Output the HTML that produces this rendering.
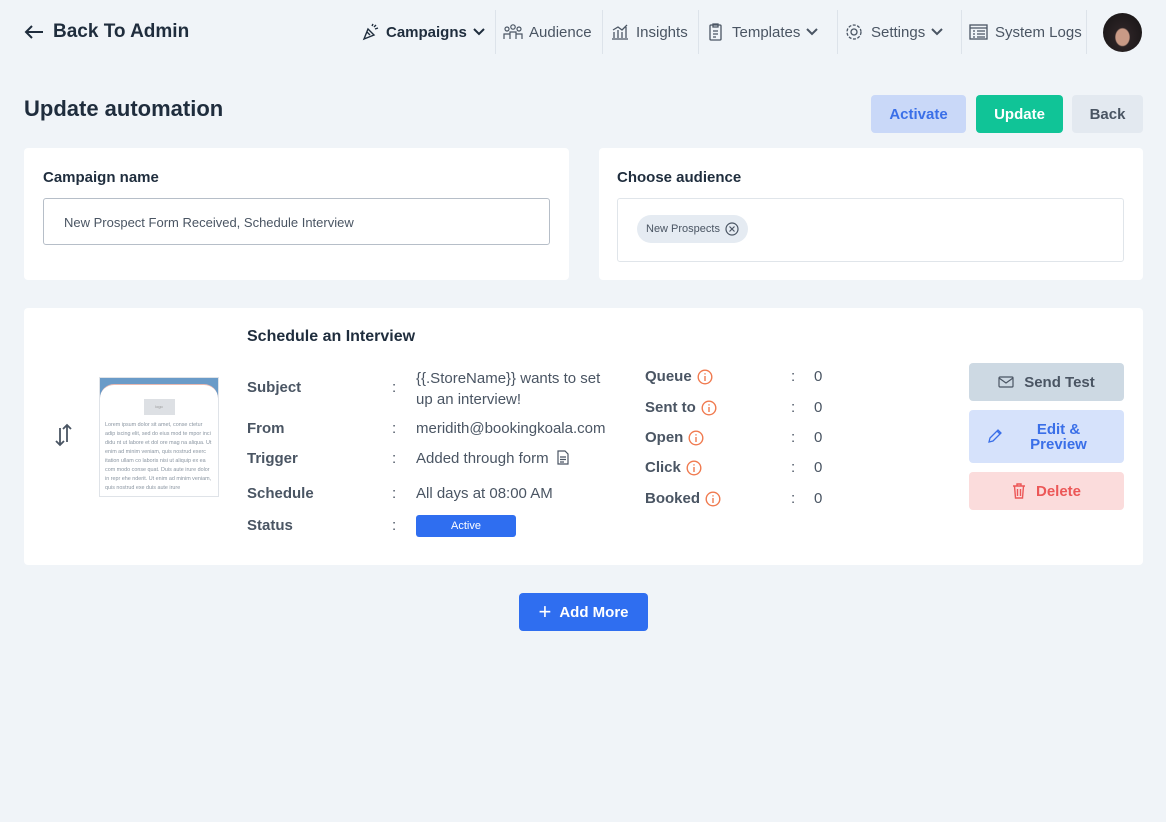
<!DOCTYPE html>
<html><head><meta charset="utf-8"><style>
*{box-sizing:border-box;margin:0;padding:0}
body{width:1166px;height:822px;background:#f0f4f8;font-family:"Liberation Sans",sans-serif;color:#1f2d3d;position:relative;overflow:hidden}
.a{position:absolute}
.nav{font-size:15px;color:#4a5563;display:flex;align-items:center;gap:6px;top:22px;height:20px}
.sep{position:absolute;top:10px;width:1px;height:44px;background:#dde3ea}
.card{position:absolute;background:#fff;border-radius:4px}
.lbl{font-size:15px;color:#3d4a57;font-weight:bold}
.btn{position:absolute;border-radius:4px;display:flex;align-items:center;justify-content:center;font-size:15px;font-weight:bold}
.row{position:absolute;font-size:15px;color:#4a5563;line-height:18px}
.k{font-weight:bold;color:#4a5563;display:flex;align-items:center}
.info{margin-left:5px;display:block}
</style></head><body>
<div class="a" style="left:24px;top:21px;font-size:19px;font-weight:bold;color:#1f2d3d;display:flex;align-items:center"><svg width="20" height="14" viewBox="0 0 20 14" fill="none" stroke="#1f2d3d" stroke-width="2" style="margin-right:9px"><path d="M19 7H2M8 1L2 7l6 6"/></svg>Back To Admin</div>

<div class="a nav" style="left:360px;color:#1f2d3d;font-weight:bold"><svg width="20" height="18" viewBox="0 0 20 18" fill="none" stroke="#1f2d3d" stroke-width="1.4"><path d="M4 16l4-10 6 6-10 4zM7 9l3 3M12 3l1-2M15 6l3-1M14 4l2-2"/></svg>Campaigns <svg width="12" height="8" viewBox="0 0 12 8" fill="none" stroke="#1f2d3d" stroke-width="2"><path d="M1 1l5 5 5-5"/></svg></div>
<div class="sep" style="left:495px"></div>
<div class="a nav" style="left:503px"><svg width="20" height="18" viewBox="0 0 20 18" fill="none" stroke="#4a5563" stroke-width="1.2"><circle cx="4" cy="6" r="2"/><circle cx="10" cy="4" r="2.2"/><circle cx="16" cy="6" r="2"/><path d="M1 16v-5h6v5M7 16v-7h6v7M13 16v-5h6v5"/></svg>Audience</div>
<div class="sep" style="left:602px"></div>
<div class="a nav" style="left:610px"><svg width="20" height="18" viewBox="0 0 20 18" fill="none" stroke="#4a5563" stroke-width="1.3"><path d="M2 16h16M4 15V9M8 15V7M12 15V9M16 15V4M3 7l5-3 4 3 5-5"/></svg>Insights</div>
<div class="sep" style="left:698px"></div>
<div class="a nav" style="left:706px"><svg width="20" height="18" viewBox="0 0 20 18" fill="none" stroke="#4a5563" stroke-width="1.3"><rect x="4" y="2" width="11" height="15" rx="1"/><path d="M7 1h5v3H7zM7 8h5M7 11h5M7 14h3"/></svg> Templates <svg width="12" height="8" viewBox="0 0 12 8" fill="none" stroke="#4a5563" stroke-width="2"><path d="M1 1l5 5 5-5"/></svg></div>
<div class="sep" style="left:837px"></div>
<div class="a nav" style="left:845px"><svg width="20" height="18" viewBox="0 0 20 18" fill="none" stroke="#4a5563" stroke-width="1.3"><circle cx="9" cy="9" r="3"/><circle cx="9" cy="9" r="7" stroke-dasharray="3 1.5"/></svg>Settings <svg width="12" height="8" viewBox="0 0 12 8" fill="none" stroke="#4a5563" stroke-width="2"><path d="M1 1l5 5 5-5"/></svg></div>
<div class="sep" style="left:961px"></div>
<div class="a nav" style="left:969px"><svg width="20" height="18" viewBox="0 0 20 18" fill="none" stroke="#4a5563" stroke-width="1.3"><rect x="1" y="2" width="17" height="14"/><path d="M1 5h17M4 8h2M8 8h8M4 11h2M8 11h8M4 14h2M8 14h8"/></svg>System Logs</div>
<div class="sep" style="left:1086px"></div>
<div class="a" style="left:1103px;top:13px;width:39px;height:39px;border-radius:50%;background:radial-gradient(ellipse at 50% 62%,#c99a86 0 24%,#2a2224 28%,#151314 100%)"></div>

<div class="a" style="left:24px;top:96px;font-size:22px;font-weight:bold;color:#1f2d3d">Update automation</div>
<div class="btn" style="left:871px;top:95px;width:95px;height:38px;background:#c9d8f8;color:#3a6fe8">Activate</div>
<div class="btn" style="left:976px;top:95px;width:87px;height:38px;background:#10c497;color:#fff">Update</div>
<div class="btn" style="left:1072px;top:95px;width:71px;height:38px;background:#e3e9f0;color:#4a5563">Back</div>

<div class="card" style="left:24px;top:148px;width:545px;height:132px">
<div class="lbl a" style="left:19px;top:21px;color:#1f2d3d">Campaign name</div>
<div class="a" style="left:19px;top:50px;width:507px;height:47px;border:1px solid #b6bec8;border-radius:3px;font-size:13px;color:#4a5563;padding:16px 20px">New Prospect Form Received, Schedule Interview</div>
</div>
<div class="card" style="left:599px;top:148px;width:544px;height:132px">
<div class="lbl a" style="left:18px;top:21px;color:#1f2d3d">Choose audience</div>
<div class="a" style="left:18px;top:50px;width:507px;height:64px;border:1px solid #e0e5ea;border-radius:3px"></div>
<div class="a" style="left:38px;top:67px;height:28px;border-radius:14px;background:#e5ebf2;font-size:11px;color:#4a5563;padding:0 9px;display:flex;align-items:center">New Prospects <svg width="14" height="14" viewBox="0 0 14 14" fill="none" stroke="#4a5563" stroke-width="1.2" style="margin-left:5px"><circle cx="7" cy="7" r="6"/><path d="M4.5 4.5l5 5M9.5 4.5l-5 5"/></svg></div>
</div>

<div class="card" style="left:24px;top:308px;width:1119px;height:257px">
<div class="a" style="left:223px;top:20px;font-size:16px;font-weight:bold;color:#1f2d3d">Schedule an Interview</div>
<svg class="a" style="left:30px;top:114px" width="20" height="26" viewBox="0 0 20 26" fill="none" stroke="#4a5563" stroke-width="1.8"><path d="M6 6v17M2 19l4 4 4-4M13 20V3M9 7l4-4 4 4"/></svg>
<div class="a" style="left:75px;top:69px;width:120px;height:120px;border:1px solid #dfe3e8;background:#6a9bc8;overflow:hidden">
<div style="position:absolute;left:0;right:0;top:6px;bottom:0;background:#fff;border-top:1px solid #e8b8b0;border-radius:14px 14px 0 0"></div>
<div style="position:relative;margin:21px auto 0;width:31px;height:16px;background:#dde0e4;font-size:4px;color:#999;text-align:center;line-height:16px">logo</div>
<div style="position:relative;font-size:5.4px;line-height:9px;color:#8a95a1;padding:6px 5px 0">Lorem ipsum dolor sit amet, conse ctetur adip iscing elit, sed do eius mod te mpor inci didu nt ut labore et dol ore mag na aliqua. Ut enim ad minim veniam, quis nostrud exerc itation ullam co laboris nisi ut aliquip ex ea com modo conse quat. Duis aute irure dolor in repr ehe nderit. Ut enim ad minim veniam, quis nostrud exe duis aute irure</div>
</div>
<div class="row k" style="left:223px;top:71px">Subject</div><div class="row" style="left:368px;top:71px">:</div><div class="row" style="left:392px;top:60px;line-height:21px;width:200px">{{.StoreName}} wants to set up an interview!</div>
<div class="row k" style="left:223px;top:112px">From</div><div class="row" style="left:368px;top:112px">:</div><div class="row" style="left:392px;top:112px">meridith@bookingkoala.com</div>
<div class="row k" style="left:223px;top:142px">Trigger</div><div class="row" style="left:368px;top:142px">:</div><div class="row" style="left:392px;top:142px">Added through form <svg width="14" height="15" viewBox="0 0 14 15" fill="none" stroke="#4a5563" stroke-width="1.2" style="vertical-align:-2px;margin-left:3px"><path d="M2 1h7l3 3v10H2zM4 7h6M4 9.5h6M4 12h4"/></svg></div>
<div class="row k" style="left:223px;top:177px">Schedule</div><div class="row" style="left:368px;top:177px">:</div><div class="row" style="left:392px;top:177px">All days at 08:00 AM</div>
<div class="row k" style="left:223px;top:209px">Status</div><div class="row" style="left:368px;top:209px">:</div><div class="a" style="left:392px;top:207px;width:100px;height:22px;background:#2f6ef0;border-radius:3px;color:#fff;font-size:11px;text-align:center;line-height:22px">Active</div>

<div class="row k" style="left:621px;top:60px">Queue<svg class="info" width="16" height="16" viewBox="0 0 16 16" fill="none" stroke="#f07a4f" stroke-width="1.4"><circle cx="8" cy="8" r="6.8"/><path d="M8 7v5M8 4.2v1.3"/></svg></div><div class="row" style="left:767px;top:60px">:</div><div class="row" style="left:790px;top:60px">0</div>
<div class="row k" style="left:621px;top:91px">Sent to<svg class="info" width="16" height="16" viewBox="0 0 16 16" fill="none" stroke="#f07a4f" stroke-width="1.4"><circle cx="8" cy="8" r="6.8"/><path d="M8 7v5M8 4.2v1.3"/></svg></div><div class="row" style="left:767px;top:91px">:</div><div class="row" style="left:790px;top:91px">0</div>
<div class="row k" style="left:621px;top:121px">Open<svg class="info" width="16" height="16" viewBox="0 0 16 16" fill="none" stroke="#f07a4f" stroke-width="1.4"><circle cx="8" cy="8" r="6.8"/><path d="M8 7v5M8 4.2v1.3"/></svg></div><div class="row" style="left:767px;top:121px">:</div><div class="row" style="left:790px;top:121px">0</div>
<div class="row k" style="left:621px;top:151px">Click<svg class="info" width="16" height="16" viewBox="0 0 16 16" fill="none" stroke="#f07a4f" stroke-width="1.4"><circle cx="8" cy="8" r="6.8"/><path d="M8 7v5M8 4.2v1.3"/></svg></div><div class="row" style="left:767px;top:151px">:</div><div class="row" style="left:790px;top:151px">0</div>
<div class="row k" style="left:621px;top:182px">Booked<svg class="info" width="16" height="16" viewBox="0 0 16 16" fill="none" stroke="#f07a4f" stroke-width="1.4"><circle cx="8" cy="8" r="6.8"/><path d="M8 7v5M8 4.2v1.3"/></svg></div><div class="row" style="left:767px;top:182px">:</div><div class="row" style="left:790px;top:182px">0</div>

<div class="btn" style="left:945px;top:55px;width:155px;height:38px;background:#cdd9e3;color:#4a5563"><svg width="16" height="12" viewBox="0 0 16 12" fill="none" stroke="#4a5563" stroke-width="1.2" style="margin-right:10px"><rect x="1" y="1" width="14" height="10" rx="1"/><path d="M1 2l7 5 7-5"/></svg>Send Test</div>
<div class="btn" style="left:945px;top:102px;width:155px;height:53px;background:#d6e2fb;color:#3a6fe8;line-height:15px"><svg width="16" height="16" viewBox="0 0 16 16" fill="none" stroke="#3a6fe8" stroke-width="1.3" style="position:absolute;left:18px;top:18px"><path d="M2 14l1-4 8-8 3 3-8 8zM10 3l3 3"/></svg><span style="text-align:center;margin-left:24px">Edit &amp;<br>Preview</span></div>
<div class="btn" style="left:945px;top:164px;width:155px;height:38px;background:#fbdcdc;color:#ec5757"><svg width="14" height="16" viewBox="0 0 14 16" fill="none" stroke="#ec5757" stroke-width="1.4" style="margin-right:10px"><path d="M1 3h12M5 3V1h4v2M2.5 3l1 12h7l1-12M5.5 6v7M8.5 6v7"/></svg>Delete</div>
</div>

<div class="btn" style="left:519px;top:593px;width:129px;height:38px;background:#2f6ef0;color:#fff;font-weight:bold"><span style="font-size:22px;font-weight:normal;margin-right:8px;line-height:20px">+</span>Add More</div>
</body></html>
